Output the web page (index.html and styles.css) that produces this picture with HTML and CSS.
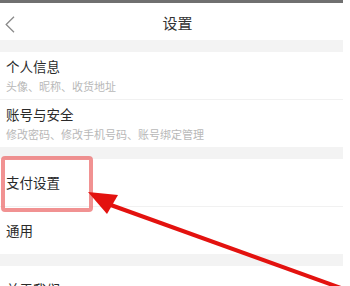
FILE: index.html
```html
<!DOCTYPE html>
<html lang="zh">
<head>
<meta charset="utf-8">
<link rel="stylesheet" href="styles.css">
</head>
<body>
<div class="page">
  <div class="statusbar"></div>
  <div class="header">
    <div class="back">
      <svg width="10" height="17" viewBox="0 0 10 17"><path d="M9 0.8 L1.2 8.5 L9 16.2" fill="none" stroke="#8a8a8a" stroke-width="1.3"/></svg>
    </div>
    <div class="title">设置</div>
    <div></div>
  </div>
  <div class="gap"></div>
  <div class="item two">
    <div class="name">个人信息</div>
    <div class="sub">头像、昵称、收货地址</div>
  </div>
  <div class="item two last">
    <div class="name">账号与安全</div>
    <div class="sub">修改密码、修改手机号码、账号绑定管理</div>
  </div>
  <div class="gap"></div>
  <div class="item one">
    <div class="name">支付设置</div>
    <div class="highlight"></div>
  </div>
  <div class="item one last">
    <div class="name">通用</div>
  </div>
  <div class="gap"></div>
  <div class="item one">
    <div class="name">关于我们</div>
  </div>
</div>
<svg class="arrow" width="350" height="286" viewBox="0 0 350 286">
  <line x1="108" y1="204" x2="352" y2="292" stroke="#e3120f" stroke-width="4"/>
  <polygon points="88,192 118,195 107,214" fill="#e3120f"/>
</svg>
</body>
</html>
```
FILE: styles.css
```css
html, body {
  margin: 0;
  padding: 0;
  background: #ffffff;
  overflow: hidden;
}
body {
  width: 350px;
  height: 286px;
  position: relative;
  font-family: "Noto Sans CJK SC", "Noto Sans", sans-serif;
}
.page {
  width: 343px;
}
.statusbar {
  height: 3px;
  background: #707070;
}
.header {
  height: 37px;
  display: grid;
  grid-template-columns: 40px 1fr 40px;
  align-items: center;
}
.back {
  padding-left: 5px;
  padding-top: 5px;
  display: flex;
  align-items: center;
}
.title {
  text-align: center;
  font-size: 15px;
  color: #333333;
  padding-left: 12px;
  padding-top: 2px;
}
.gap {
  height: 12px;
  background: #f3f3f3;
}
.item {
  position: relative;
  padding-left: 6px;
  display: flex;
  flex-direction: column;
  justify-content: center;
  border-bottom: 1px solid #f1f1f1;
}
.item.last {
  border-bottom: none;
}
.item.two {
  height: 47px;
}
.item.one {
  height: 47px;
}
.name {
  font-size: 13.5px;
  line-height: 17px;
  color: #2a2a2a;
}
.sub {
  font-size: 11px;
  line-height: 14px;
  margin-top: 4px;
  color: #b8b8b8;
}
.highlight {
  position: absolute;
  left: 1px;
  top: -3px;
  width: 84px;
  height: 48px;
  border: 4px solid rgba(236, 110, 110, 0.75);
  border-radius: 4px;
}
.arrow {
  position: absolute;
  left: 0;
  top: 0;
}
```
